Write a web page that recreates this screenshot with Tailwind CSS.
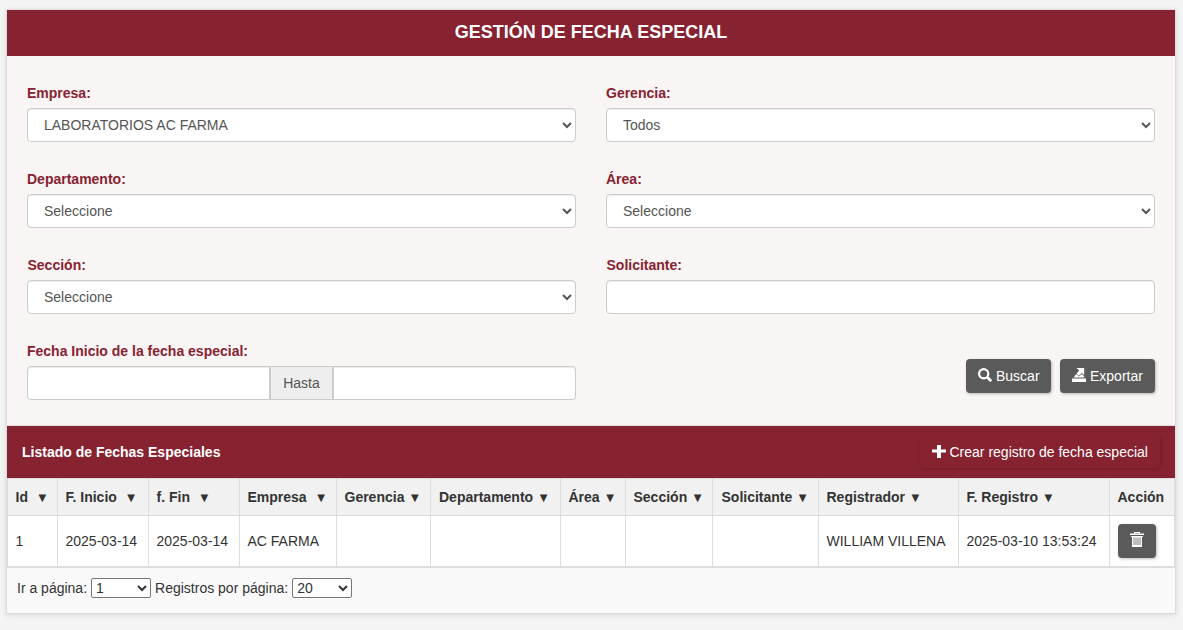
<!DOCTYPE html>
<html lang="es">
<head>
<meta charset="utf-8">
<title>Gestión de fecha especial</title>
<script src="https://cdn.jsdelivr.net/npm/@tailwindcss/browser@4"></script>
</head>
<body class="h-[630px] overflow-hidden bg-[#f4f4f4] px-1.5 pt-[9px] font-['Liberation_Sans',Arial,sans-serif] text-sm leading-5 text-[#333]">
<main class="h-[605px] w-[1170px] border border-[#ddd] bg-[#f9f9f9] shadow-[0_1px_5px_rgba(0,0,0,0.12)]">
  <h1 class="h-[46px] bg-[#872231] pt-3 text-center text-lg leading-5 font-bold text-white">GESTIÓN DE FECHA ESPECIAL</h1>

  <form class="grid h-[370px] grid-cols-2 content-start gap-x-[30px] gap-y-[27px] border-b border-[#ddd] bg-[#f9f5f4] px-5 pt-[27px]">
    <label class="flex flex-col gap-[5px] font-bold text-[#872231]">Empresa:
      <select class="h-[34px] w-full rounded border border-[#ccc] bg-white py-1.5 pr-[13px] pl-3 font-normal text-[#555] shadow-[inset_0_1px_1px_rgba(0,0,0,0.075)]"><option>LABORATORIOS AC FARMA</option></select>
    </label>
    <label class="flex flex-col gap-[5px] font-bold text-[#872231]">Gerencia:
      <select class="h-[34px] w-full rounded border border-[#ccc] bg-white px-3 py-1.5 font-normal text-[#555] shadow-[inset_0_1px_1px_rgba(0,0,0,0.075)]"><option>Todos</option></select>
    </label>
    <label class="flex flex-col gap-[5px] font-bold text-[#872231]">Departamento:
      <select class="h-[34px] w-full rounded border border-[#ccc] bg-white px-3 py-1.5 font-normal text-[#555] shadow-[inset_0_1px_1px_rgba(0,0,0,0.075)]"><option>Seleccione</option></select>
    </label>
    <label class="flex flex-col gap-[5px] font-bold text-[#872231]">Área:
      <select class="h-[34px] w-full rounded border border-[#ccc] bg-white px-3 py-1.5 font-normal text-[#555] shadow-[inset_0_1px_1px_rgba(0,0,0,0.075)]"><option>Seleccione</option></select>
    </label>
    <label class="flex flex-col gap-[5px] font-bold text-[#872231]"><span class="pl-[0.5px]">Sección:</span>
      <select class="h-[34px] w-full rounded border border-[#ccc] bg-white px-3 py-1.5 font-normal text-[#555] shadow-[inset_0_1px_1px_rgba(0,0,0,0.075)]"><option>Seleccione</option></select>
    </label>
    <label class="flex flex-col gap-[5px] font-bold text-[#872231]"><span class="pl-[0.5px]">Solicitante:</span>
      <input class="h-[34px] w-full rounded border border-[#ccc] bg-white px-3 font-normal shadow-[inset_0_1px_1px_rgba(0,0,0,0.075)]">
    </label>
    <div class="flex flex-col gap-[5px]">
      <span class="font-bold text-[#872231]">Fecha Inicio de la fecha especial:</span>
      <div class="flex h-[34px]">
        <input class="w-[243px] rounded-l border border-[#ccc] bg-white px-3 shadow-[inset_0_1px_1px_rgba(0,0,0,0.075)]">
        <span class="w-[62px] border-y border-l border-[#ccc] bg-[#eee] text-center leading-8 text-[#555]">Hasta</span>
        <input class="w-[244px] rounded-r border border-l-2 border-[#ccc] bg-white px-3 shadow-[inset_0_1px_1px_rgba(0,0,0,0.075)]">
      </div>
    </div>
    <div class="flex items-start justify-end gap-[9px] pt-[18px]">
      <button type="button" class="flex h-[34px] w-[85px] items-center gap-1 rounded bg-[#5a5a5a] pl-3 text-white shadow-[1px_1px_3px_rgba(0,0,0,0.25)]">
        <svg class="mb-0.5 size-3.5" viewBox="0 0 14 14" fill="none" stroke="#fff"><circle cx="5.700" cy="5.700" r="4.600" stroke-width="2.200"/><path d="M9 9 13.200 13.200" stroke-width="2.700"/></svg>
        <span>Buscar</span>
      </button>
      <button type="button" class="flex h-[34px] w-[95px] items-center gap-1 rounded bg-[#5a5a5a] pl-3 text-white shadow-[1px_1px_3px_rgba(0,0,0,0.25)]">
        <svg class="mb-0.5 size-3.5" viewBox="0 0 14 14" fill="#fff"><path d="M0 10.500h14V14H0zM1.800 9.500 3.600 6.500h1.200l2 2 2.500-2h1.500l1.800 3zM4.500 0H12.200v7L10 5 6.800 7.700 4.500 5.500 7.200 2.500z"/></svg>
        <span>Exportar</span>
      </button>
    </div>
  </form>

  <div class="flex h-[52px] items-center justify-between bg-[#872231] px-[15px] text-white">
    <h2 class="font-bold">Listado de Fechas Especiales</h2>
    <button type="button" class="flex h-8 w-[240px] items-center gap-1 rounded bg-[#872231] pl-[11.5px] shadow-[1px_1px_3px_rgba(0,0,0,0.18)]">
      <svg class="mb-0.5 size-3.5" viewBox="0 0 14 14" fill="#fff"><path d="M5 1h4v4.500h5v3H9V14H5V8.500H0v-3h5z"/></svg>
      <span>Crear registro de fecha especial</span>
    </button>
  </div>

  <table class="w-[1168px] table-fixed border-collapse bg-white text-left whitespace-nowrap [&_td]:border [&_td]:border-[#ddd] [&_td]:px-[7.5px] [&_td]:py-0 [&_th]:border [&_th]:border-[#ddd] [&_th]:bg-[#f1f1f1] [&_th]:px-[7.5px] [&_th]:py-0 [&_th]:font-bold [&_i]:relative [&_i]:-top-px [&_i]:ml-[6.5px] [&_i]:inline-block [&_i]:font-['DejaVu_Sans'] [&_i]:text-[10px] [&_i]:leading-none [&_i]:font-normal [&_i]:not-italic">
    <colgroup><col class="w-[50px]"><col class="w-[91px]"><col class="w-[91px]"><col class="w-[97px]"><col class="w-[94px]"><col class="w-[130px]"><col class="w-[65px]"><col class="w-[87px]"><col class="w-[106px]"><col class="w-[140px]"><col class="w-[151px]"><col></colgroup>
    <thead>
      <tr class="h-[37px]"><th>Id<i class="pl-1">▼</i></th><th>F. Inicio<i class="pl-1">▼</i></th><th>f. Fin<i class="pl-1">▼</i></th><th>Empresa<i class="pl-1">▼</i></th><th>Gerencia<i>▼</i></th><th><span class="pl-[0.5px]">Departamento</span><i>▼</i></th><th>Área<i>▼</i></th><th>Sección<i>▼</i></th><th><span class="pl-px">Solicitante</span><i>▼</i></th><th>Registrador<i>▼</i></th><th>F. Registro<i>▼</i></th><th>Acción</th></tr>
    </thead>
    <tbody>
      <tr class="h-[51px]"><td>1</td><td>2025-03-14</td><td>2025-03-14</td><td>AC FARMA</td><td></td><td></td><td></td><td></td><td></td><td>WILLIAM VILLENA</td><td>2025-03-10 13:53:24</td>
      <td><button type="button" aria-label="Eliminar" class="flex h-[34px] w-[38px] justify-center rounded bg-[#5a5a5a] pt-2 shadow-[1px_1px_3px_rgba(0,0,0,0.25)]"><svg class="h-[15px] w-3.5" viewBox="0 0 14 15"><path fill="#fff" fill-rule="evenodd" d="M4 0h6v1.500h4V3H0V1.500h4zM5 1v.5h4V1zM1 4h12v1h-1v10H2V5H1z"/><path stroke="#5a5a5a" stroke-width=".8" d="M4 5.500V13M6 5.500V13M8 5.500V13M10 5.500V13"/></svg></button></td></tr>
    </tbody>
  </table>

  <div class="flex h-[46px] items-start border-t border-[#ddd] bg-[#f9f9f9] pt-[10px] pl-[10px]">
    <span>Ir a página:</span>
    <select class="mr-1 ml-1 h-5 w-[60px] rounded-[2px] border border-[#767676] bg-white text-sm leading-[18px]"><option>1</option></select>
    <span>Registros por página:</span>
    <select class="ml-1 h-5 w-[60px] rounded-[2px] border border-[#767676] bg-white text-sm leading-[18px]"><option>20</option></select>
  </div>
</main>
</body>
</html>
